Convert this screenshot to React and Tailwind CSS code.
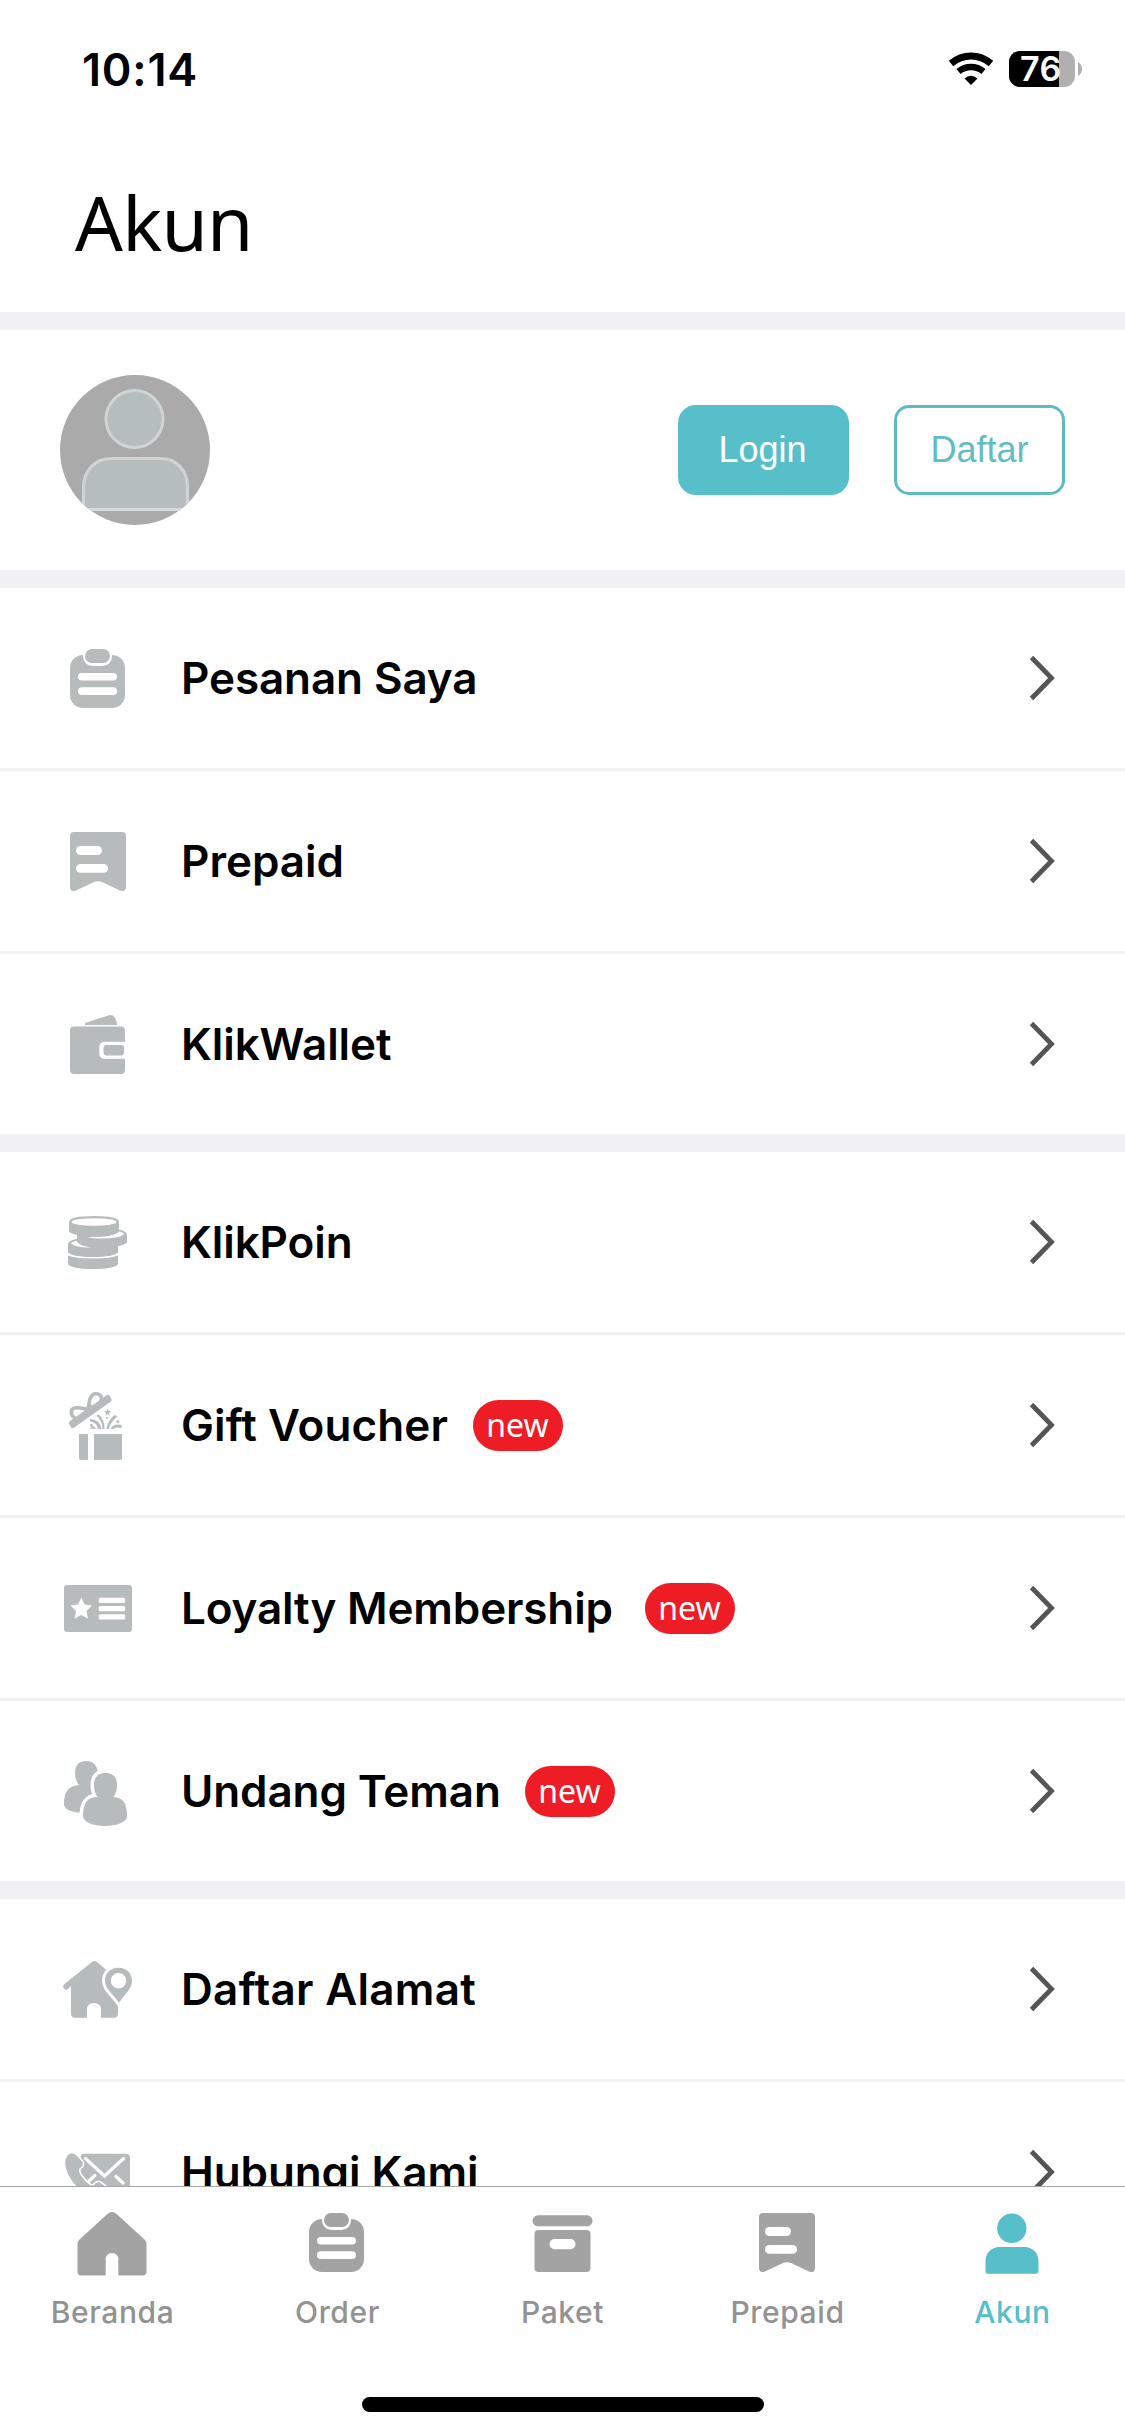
import React from 'react';

const ClipboardIcon = () => (
    <svg viewBox="0 0 90 90" className="w-[90px] h-[90px] shrink-0" fill="currentColor">
        <rect x="17" y="22" width="55" height="53" rx="13" />
        <rect x="31.5" y="14.5" width="26" height="17" rx="8" fill="none" stroke="white" strokeWidth="3" />
        <rect x="32" y="16" width="25" height="14" rx="7" />
        <rect x="25" y="40" width="39" height="7.5" rx="3.7" fill="white" />
        <rect x="25" y="54.3" width="39" height="7.7" rx="3.8" fill="white" />
    </svg>
);

const BookmarkIcon = () => (
    <svg viewBox="0 0 90 90" className="w-[90px] h-[90px] shrink-0" fill="currentColor">
        <path d="M21 16H69Q73 16 73 20V70.500Q73 76.500 67 74.500L49 66Q45 64.500 41 66L23 74.500Q17 76.500 17 70.500V20Q17 16 21 16Z" />
        <rect x="23" y="30" width="26" height="9" rx="4.500" fill="white" />
        <rect x="23" y="48" width="32" height="8.700" rx="4.300" fill="white" />
    </svg>
);

const WalletIcon = () => (
    <svg viewBox="0 0 90 90" className="w-[90px] h-[90px] shrink-0" fill="currentColor">
        <path d="M32 26V24L56 16.200Q60 15 62 19Q64 22.500 64 26Z" />
        <path d="M21 27.500H68Q72 27.500 72 31.500V42.700H52Q46.300 42.700 46.300 48.500V54Q46.300 59.800 52 59.800H72V71Q72 75 68 75H21Q17 75 17 71V31.500Q17 27.500 21 27.500Z" />
        <rect x="50.500" y="46" width="20.500" height="10.500" rx="3" />
    </svg>
);

const CoinsIcon = () => (
    <svg viewBox="0 0 90 90" className="w-[90px] h-[90px] shrink-0" fill="currentColor">
        <path d="M15 58.500V67Q18 72 40 72Q62 72 65 67V58.500Q58 61.500 40 61.500Q22 61.500 15 58.500Z" />
        <path d="M15 47Q15 44 23 42L65 46V55.500Q60 60 40 60Q20 60 15 55.500Z" />
        <path d="M18 46.500Q19 44.500 24.500 44Q26 49 39 50.500Q23 51 18 46.500Z" fill="white" />
        <path d="M24 37L66 32.500Q74 34 74 38V45.500Q70 50 49 50Q29 50 24 45Z" />
        <path d="M66 34.500Q71 35.500 71 37.500Q66 41.500 49 41.500Q40 41.500 35 40Q60 40.500 66 34.500Z" fill="white" />
        <path d="M16 25Q16 19 41 19Q66 19 66 25V34.500Q62 39 41 39Q20 39 16 34.500Z" />
        <ellipse cx="41" cy="25" rx="22.500" ry="3.800" fill="white" />
    </svg>
);

const GiftIcon = () => (
    <svg viewBox="0 0 90 90" className="w-[90px] h-[90px] shrink-0" fill="currentColor">
        <path d="M17 41L54 15Q55.500 14.500 56.500 15.500L58.500 19.500Q59 20.500 58 21.500L20.500 48Q19 48.500 18 47.500L16 43.500Q15.700 42 17 41Z" />
        <g fill="none" stroke="currentColor" strokeWidth="3.600" strokeLinejoin="round">
            <path d="M22 38C17 35 17 29 22 28C27 27 34 30 36 29C35 24 37 13.500 43 13.500C48 14 49.500 18 48 21" />
            <path d="M34 26L41 31" strokeWidth="7" />
        </g>
        <path d="M26 54H35V80H28Q26 80 26 78Z" />
        <path d="M41 54H69V78Q69 80 67 80H41Z" />
        <g>
            <path d="M37 39Q47 39.500 48.500 49H45Q44 42 37 41.500Z" />
            <path d="M43.500 35.500L46 34.500Q52 41 51.500 49H49.500Q49.500 41 43.500 35.500Z" />
            <path d="M61.500 35L64.500 36.500Q57 42 56 49H53.500Q54.500 41 61.500 35Z" />
            <path d="M68.500 45V48Q62 46.500 60.500 49H57.500Q60 43 68.500 45Z" />
            <path d="M54.700 28.500L55.600 31L58 31.300L56.200 33L56.700 35.500L54.500 34L52.300 35.300L53 32.900L51 31.200L53.700 31Z" />
            <circle cx="54" cy="38" r="1.100" />
            <circle cx="38.500" cy="45.500" r="1.400" />
            <circle cx="64.800" cy="41.500" r="1.500" />
        </g>
        <path d="M36 48.500L41 46L43 49Z" />
    </svg>
);

const MemberCardIcon = () => (
    <svg viewBox="0 0 90 90" className="w-[90px] h-[90px] shrink-0" fill="currentColor">
        <rect x="11" y="22" width="68" height="47" rx="3" />
        <path d="M28.300 34.500L31.600 41.500L39 42.500L33.500 48L35 55.700L28.300 52L21.600 55.700L23 48L17.500 42.500L25 41.500Z" fill="white" />
        <g fill="white">
            <rect x="45.700" y="34.800" width="26.500" height="5.300" rx="1.500" />
            <rect x="45.700" y="43" width="26.500" height="5.300" rx="1.500" />
            <rect x="45.700" y="51.200" width="26.500" height="5.300" rx="1.500" />
        </g>
    </svg>
);

const FriendsIcon = () => (
    <svg viewBox="0 0 90 90" className="w-[90px] h-[90px] shrink-0" fill="currentColor">
        <path d="M33 15C40 15 44.500 19 44.500 27C44.500 35 40 42 33 42C26 42 22 35 22 27C22 19 26 15 33 15Z" />
        <path d="M26 39H41L45 52L30 66.500C20 67 11 64 11 58C11 46 15 40 26 39Z" />
        <g stroke="white" strokeWidth="7" strokeLinejoin="round">
            <path d="M52.300 27C60 27 64 31 64 39C64 48 60 54 52.300 54C45 54 41 48 41 39C41 31 45 27 52.300 27Z" />
            <path d="M43 51H61C70 52 74 57 74 70C74 76 64 80 52 80C40 80 30 76 30 70C30 57 34 52 43 51Z" />
        </g>
        <path d="M52.300 27C60 27 64 31 64 39C64 48 60 54 52.300 54C45 54 41 48 41 39C41 31 45 27 52.300 27Z" />
        <path d="M43 51H61C70 52 74 57 74 70C74 76 64 80 52 80C40 80 30 76 30 70C30 57 34 52 43 51Z" />
    </svg>
);

const AddressIcon = () => (
    <svg viewBox="0 0 90 90" className="w-[90px] h-[90px] shrink-0" fill="currentColor">
        <path d="M39 18Q41.500 16 44 18L65 36V70Q65 73.700 61 73.700H48V65.500Q48 59 41 59Q34 59 34 65.500V73.700H22Q18 73.700 18 70V42L15 45Q12.500 46.500 11 44.500Q9 42 11.500 40Z" />
        <path d="M65.500 23.700C74 23.700 79 29.500 79 37C79 45 71 51 66 58.700C61 51 52 45 52 37C52 29.500 57 23.700 65.500 23.700Z" fill="white" stroke="white" strokeWidth="6" />
        <path fillRule="evenodd" d="M65.500 23.700C74 23.700 79 29.500 79 37C79 45 71 51 66 58.700C61 51 52 45 52 37C52 29.500 57 23.700 65.500 23.700ZM65.500 29A7.700 7.700 0 1 0 65.500 44.400A7.700 7.700 0 1 0 65.500 29Z" />
    </svg>
);

const ContactIcon = () => (
    <svg viewBox="0 0 90 90" className="w-[90px] h-[90px] shrink-0" fill="currentColor">
        <rect x="27.500" y="26.700" width="49.500" height="35" rx="4" />
        <g fill="none" stroke="white" strokeWidth="3.200" strokeLinecap="round">
            <path d="M32.500 31.500L51.500 49L70.500 31.500" />
            <path d="M42 48.500L34 56" />
            <path d="M63 49.500L70 56" />
        </g>
        <path
            d="M15 28C19 25 22 27 24 29L28.500 34C31 37 30 39 27 41C25 43 26 47 30 51C34 56 38 60 41 58C43 55 46 54 49 57L57 63C60 67 54 73 47 73C29 70 10 48 12.500 33C13 31 14 29 15 28Z"
            stroke="white"
            strokeWidth="3"
            paintOrder="stroke"
        />
    </svg>
);

const HomeIcon = () => (
    <svg viewBox="0 0 90 90" className="w-[90px] h-[90px] shrink-0" fill="currentColor">
        <path d="M41 16.500Q45 13.300 49 16.500L77.500 42.500Q79.500 44.500 79.500 47V74.500Q79.500 78.500 75.500 78.500H51.300V62.500Q51.300 56 45 56Q38.700 56 38.700 62.500V78.500H14.500Q10.500 78.500 10.500 74.500V47Q10.500 44.500 12.500 42.500Z" />
    </svg>
);

const BoxIcon = () => (
    <svg viewBox="0 0 90 90" className="w-[90px] h-[90px] shrink-0" fill="currentColor">
        <rect x="15.500" y="18.300" width="60" height="11" rx="5.500" />
        <path d="M21.500 33H69.500Q73.500 33 73.500 37V71Q73.500 75 69.500 75H21.500Q17.500 75 17.500 71V37Q17.500 33 21.500 33Z" />
        <rect x="32.500" y="42" width="26" height="10.300" rx="5.100" fill="white" />
    </svg>
);

const PersonIcon = () => (
    <svg viewBox="0 0 90 90" className="w-[90px] h-[90px] shrink-0" fill="currentColor">
        <circle cx="44.800" cy="31.300" r="14.700" />
        <path d="M32.500 50H57.500C66 50 71.500 56.500 71.500 64V74.500Q71.500 76.800 69 76.800H21Q18.500 76.800 18.500 74.500V64C18.500 56.500 24 50 32.500 50Z" />
    </svg>
);

const sections = [
    [
        { label: 'Pesanan Saya', Icon: ClipboardIcon, tracking: 'tracking-[-0.1px]' },
        { label: 'Prepaid', Icon: BookmarkIcon },
        { label: 'KlikWallet', Icon: WalletIcon, tracking: 'tracking-[-0.1px]' },
    ],
    [
        { label: 'KlikPoin', Icon: CoinsIcon, tracking: 'tracking-[-0.1px]' },
        { label: 'Gift Voucher', Icon: GiftIcon, isNew: true, labelWidth: 'w-[292px]', tracking: 'tracking-[0.1px]' },
        { label: 'Loyalty Membership', Icon: MemberCardIcon, isNew: true, labelWidth: 'w-[464px]', tracking: 'tracking-[-0.15px]' },
        { label: 'Undang Teman', Icon: FriendsIcon, isNew: true, labelWidth: 'w-[344px]', tracking: 'tracking-[-0.1px]' },
    ],
    [
        { label: 'Daftar Alamat', Icon: AddressIcon, tracking: 'tracking-[0.3px]' },
        { label: 'Hubungi Kami', Icon: ContactIcon, tracking: 'tracking-[-0.1px]' },
    ],
];

const tabs = [
    { label: 'Beranda', Icon: HomeIcon },
    { label: 'Order', Icon: ClipboardIcon },
    { label: 'Paket', Icon: BoxIcon },
    { label: 'Prepaid', Icon: BookmarkIcon },
    { label: 'Akun', Icon: PersonIcon, active: true },
];

function StatusBar() {
    return (
        <div className="h-[138px] pl-[82px] pr-[43px] flex items-center justify-between">
            <span className="text-[45px] leading-none font-semibold tracking-[0.8px]">10:14</span>
            <div className="flex items-center">
                <svg viewBox="0 0 46 34" className="w-[46px] h-[34px]" fill="none" stroke="black">
                    <path d="M3 11.500Q12 4 23 4Q34 4 43 11.500" strokeWidth="7" />
                    <path d="M10.500 19.500Q16 15 23 15Q30 15 35.500 19.500" strokeWidth="6.500" />
                    <path d="M16.500 26.500Q23 21 29.500 26.500L23 33Z" fill="black" stroke="none" />
                </svg>
                <div className="relative ml-[15px] w-[66px] h-9 rounded-[11px] bg-[#b0b0b0]">
                    <div className="w-[50px] h-full rounded-l-[11px] bg-black" />
                    <span className="absolute left-[11px] top-0 text-white text-[34px] leading-9 font-semibold tracking-[0.5px]">76</span>
                </div>
                <svg viewBox="0 0 4 14" className="ml-[3px] w-1 h-3.5" fill="#b0b0b0">
                    <path d="M0 0Q4 2.500 4 7Q4 11.500 0 14Z" />
                </svg>
            </div>
        </div>
    );
}

function Profile() {
    return (
        <div className="h-[240px] px-[60px] flex items-center">
            <svg viewBox="0 0 150 150" className="w-[150px] h-[150px] rounded-full">
                <rect width="150" height="150" fill="#aaaaaa" />
                <g fill="#b6bdbd" stroke="#cfd4d4" strokeWidth="3">
                    <circle cx="74.500" cy="44" r="28.500" />
                    <path d="M23.500 134.500V112C23.500 95 36 83.500 51 83.500H101C116 83.500 127.500 95 127.500 112V134.500Z" />
                </g>
                <path d="M20 134.500H130" stroke="#d5d9d9" strokeWidth="3" />
            </svg>
            <div className="ml-auto flex gap-[45px] font-['Liberation_Sans',sans-serif] text-4xl">
                <button className="w-[171px] h-[90px] pr-0.5 rounded-[18px] bg-[#56bfca] text-white">Login</button>
                <button className="w-[171px] h-[90px] rounded-[15px] border-3 border-[#5dbbc6] text-[#62bcc6]">Daftar</button>
            </div>
        </div>
    );
}

function MenuRow({ item }) {
    const { label, Icon, isNew, labelWidth, tracking } = item;
    return (
        <div className="h-[180px] pl-[53px] pr-[69px] flex items-center text-[#b6bbbb]">
            <Icon />
            <span className={`ml-[38px] text-[44px] leading-none font-semibold whitespace-nowrap text-black ${labelWidth || ''} ${tracking || ''}`}>{label}</span>
            {isNew && (
                <span className="w-[90px] h-[51px] pr-px rounded-full bg-[#ee1c25] text-white font-['Noto_Sans',sans-serif] text-[32px] leading-none flex items-center justify-center">
                    new
                </span>
            )}
            <svg viewBox="0 0 28 46" className="ml-auto w-7 h-[46px]" fill="none" stroke="#555555" strokeWidth="4.800">
                <path d="M3.500 2.500L23.500 23L3.500 43.500" />
            </svg>
        </div>
    );
}

function TabBar() {
    return (
        <nav className="fixed bottom-0 left-0 w-[1125px] h-[250px] bg-[#fefefe] border-t border-[#a6a6a6] flex flex-col">
            <div className="pt-[10px] grid grid-cols-5">
                {tabs.map(({ label, Icon, active }) => (
                    <div key={label} className={`flex flex-col items-center ${active ? 'text-[#56bfca]' : 'text-[#a3a3a3]'}`}>
                        <div className="pr-[2px]">
                            <Icon />
                        </div>
                        <span className={`mt-2 text-[30px] leading-[34px] font-medium tracking-[0.6px] ${active ? '' : 'text-[#929292]'}`}>{label}</span>
                    </div>
                ))}
            </div>
            <div className="mt-auto mb-6 mx-auto w-[402px] h-[15px] rounded-full bg-black" />
        </nav>
    );
}

export default function App() {
    return (
        <div className="w-[1125px] h-[2436px] overflow-hidden bg-white text-black font-['Inter',sans-serif]">
            <header className="h-[312px]">
                <StatusBar />
                <h1 className="pl-[75px] pt-[33px] text-[75px] leading-[102px] tracking-[-0.8px] font-['Noto_Sans',sans-serif]">Akun</h1>
            </header>
            <div className="h-[18px] bg-[#f0f0f5]" />
            <Profile />
            {sections.map((items, i) => (
                <section key={i} className="border-t-[18px] border-[#f0f0f5] divide-y-3 divide-[#f2f2f4]">
                    {items.map((item) => (
                        <div key={item.label}>
                            <MenuRow item={item} />
                        </div>
                    ))}
                </section>
            ))}
            <TabBar />
        </div>
    );
}
